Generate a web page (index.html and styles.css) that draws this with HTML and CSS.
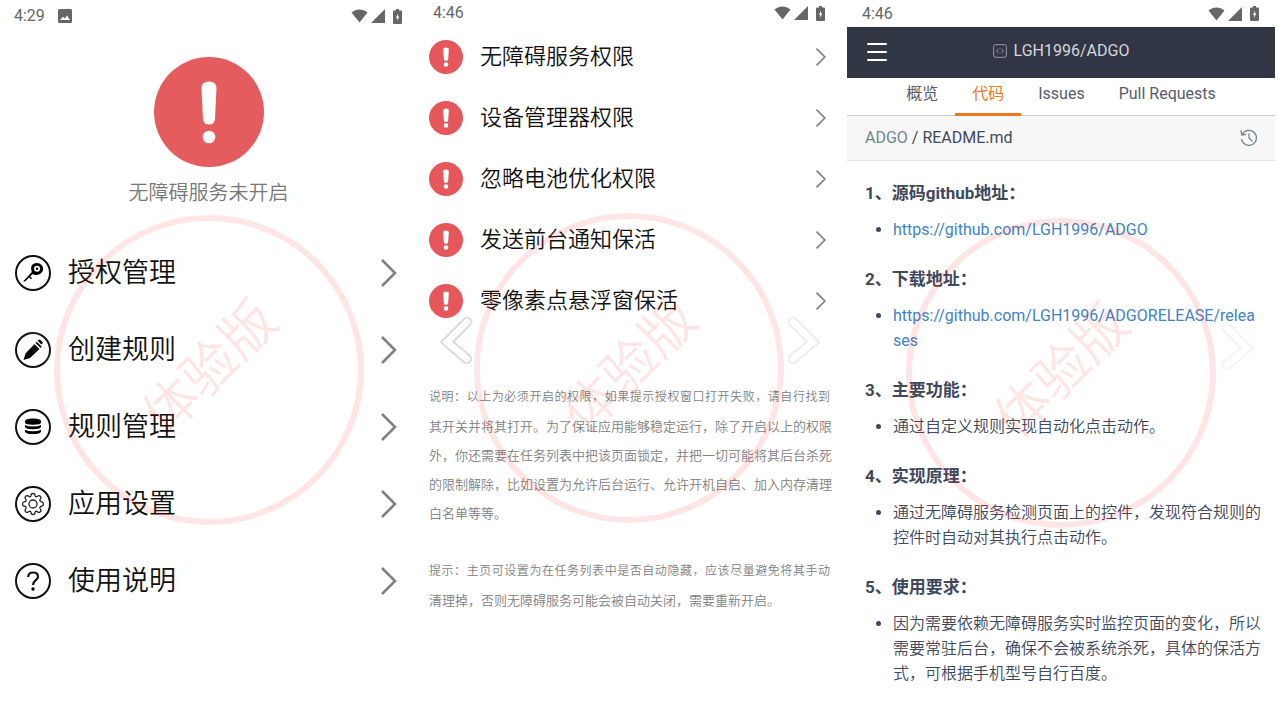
FILE: index.html
```html
<!DOCTYPE html>
<html lang="zh-CN">
<head>
<meta charset="utf-8">
<meta name="viewport" content="width=device-width, initial-scale=1">
<title>ADGO</title>
<link rel="stylesheet" href="styles.css">
</head>
<body>
<svg class="sprite" aria-hidden="true">
  <symbol id="wifi" viewBox="0 0 17 14"><path d="M0.5 3.6C5.2-.4 11.8-.4 16.500 3.600L8.500 13.500z"/></symbol>
  <symbol id="signal" viewBox="0 0 14 14"><path d="M14 0v14H0z"/></symbol>
  <symbol id="battery" viewBox="0 0 9 15"><path fill-rule="evenodd" d="M3 0h3v1.500h2q1 0 1 1V14q0 1-1 1H1q-1 0-1-1V2.500q0-1 1-1h2zM5 4.500L3 9H4.300v3L6.200 7.500H5z"/></symbol>
  <symbol id="alert" viewBox="0 0 110 110"><circle cx="55" cy="55" r="55" fill="#e55c5e"/><path fill="#fff" d="M47.500 31q0-6.500 7.500-6.500t7.500 6.500L61 62q-.6 5.500-6 5.500T49 62z"/><circle cx="55" cy="80" r="6.300" fill="#fff"/></symbol>
  <symbol id="alert-small" viewBox="0 0 34 34"><circle cx="17" cy="17" r="17" fill="#e5575a"/><path fill="#fff" d="M14.200 9q0-1.500 2.800-1.500T19.800 9l-.6 10q-.2 2-2.200 2t-2.200-2z"/><circle cx="17" cy="24.500" r="2.300" fill="#fff"/></symbol>
  <symbol id="next" viewBox="0 0 16 28"><path d="M1 1L14 14 1 27" fill="none" stroke="#808080" stroke-width="2.600"/></symbol>
  <symbol id="slide" viewBox="0 0 40 56"><path d="M31 8L11 28l20 17" fill="none" stroke="#ccc" stroke-width="9" stroke-linecap="round"/><path d="M31 8L11 28l20 17" fill="none" stroke="#fff" stroke-width="7" stroke-linecap="round"/></symbol>
</svg>
<main class="gallery">
  <section class="screen home">
    <div class="status"><span>4:29</span>
      <svg class="photo" viewBox="0 0 14 14"><path fill-rule="evenodd" d="M1.500 0h11Q14 0 14 1.500v11q0 1.500-1.500 1.500h-11Q0 14 0 12.500v-11Q0 0 1.500 0zM2 11h10L9 6.500 6.800 9.500 5 7.800z"/></svg>
      <span class="signals"><svg class="wifi"><use href="#wifi"/></svg><svg class="signal"><use href="#signal"/></svg><svg class="battery"><use href="#battery"/></svg></span></div>
    <div class="hero"><svg class="hero-icon"><use href="#alert"/></svg><p>无障碍服务未开启</p></div>
    <nav class="menu">
      <button type="button"><svg class="round" viewBox="0 0 36 36"><circle class="ring" cx="18" cy="18" r="17"/><path fill-rule="evenodd" d="M16.300 11.500C17.500 7.500 24 6.500 27 10.500S27 19.500 22 20q-3 .2-4.300-1L10 26.500H8L16.800 17q-1.200-2.500-.5-5.500zM22 10.800a3 3 0 1 0 .1 6 3 3 0 0 0-.1-6z"/><circle cx="22" cy="13.800" r="1.300"/><path d="M15 21l2 2.500-1 .8-2-2z"/></svg><span>授权管理</span><svg class="next"><use href="#next"/></svg></button>
      <button type="button"><svg class="round" viewBox="0 0 36 36"><circle class="ring" cx="18" cy="18" r="17"/><path d="M19.500 12l5 5-9.500 9-6.500 2 2-6.500zM20.500 11l1.300-1.300 5 5-1.300 1.300zM22.700 8.800l1-1q.7-.7 1.500 0l2.200 2.200q.8.8 0 1.600l-1 1z"/></svg><span>创建规则</span><svg class="next"><use href="#next"/></svg></button>
      <button type="button"><svg class="round" viewBox="0 0 36 36"><circle class="ring" cx="18" cy="18" r="17"/><path d="M10 12q0-2.500 8-2.500t8 2.500v1.500q0 2.200-8 2.200t-8-2.200zM10 16q3 1.500 8 1.500t8-1.500v2q-1 2.200-8 2.200T10 18zM10 20.700q3 1.500 8 1.500t8-1.500v2q-1 2.300-8 2.300t-8-2.300z"/></svg><span>规则管理</span><svg class="next"><use href="#next"/></svg></button>
      <button type="button"><svg class="round" viewBox="0 0 36 36"><circle class="ring" cx="18" cy="18" r="17"/><path class="thin" d="M16 9.500q0-2 2-2t2 2q.2 1.500 1.700 1.200l1.600-1q1-.5 2 .6t.5 2l-.8 1.500q-.5 1.300 1 1.900l1.300.3q1.200.4 1.200 2t-1.200 2l-1.300.3q-1.500.6-1 1.900l.8 1.500q.5 1-.5 2t-2 .6l-1.600-1q-1.500-.3-1.700 1.200 0 2-2 2t-2-2q-.2-1.500-1.700-1.200l-1.600 1q-1 .5-2-.6t-.5-2l.8-1.500q.5-1.300-1-1.900L8.700 20q-1.200-.4-1.200-2t1.200-2l1.300-.3q1.500-.6 1-1.900l-.8-1.500q-.5-1 .5-2t2-.6l1.600 1q1.500.3 1.700-1.200z"/><circle class="thin" cx="18" cy="18" r="4"/></svg><span>应用设置</span><svg class="next"><use href="#next"/></svg></button>
      <button type="button"><svg class="round" viewBox="0 0 36 36"><circle class="ring" cx="18" cy="18" r="17"/><path class="query" d="M13.200 14q0-4.500 4.900-4.500t4.900 4.200c0 3.500-5 3.500-5 8.300"/><circle cx="18" cy="26" r="1.700"/></svg><span>使用说明</span><svg class="next"><use href="#next"/></svg></button>
    </nav>
    <div class="mark"><span>体验版</span></div>
    <svg class="slide slide-prev faint"><use href="#slide"/></svg>
  </section>

  <section class="screen permissions">
    <div class="status"><span>4:46</span><span class="signals"><svg class="wifi"><use href="#wifi"/></svg><svg class="signal"><use href="#signal"/></svg><svg class="battery"><use href="#battery"/></svg></span></div>
    <div class="perm-list">
      <button type="button"><svg class="perm-icon"><use href="#alert-small"/></svg><span>无障碍服务权限</span><svg class="next"><use href="#next"/></svg></button>
      <button type="button"><svg class="perm-icon"><use href="#alert-small"/></svg><span>设备管理器权限</span><svg class="next"><use href="#next"/></svg></button>
      <button type="button"><svg class="perm-icon"><use href="#alert-small"/></svg><span>忽略电池优化权限</span><svg class="next"><use href="#next"/></svg></button>
      <button type="button"><svg class="perm-icon"><use href="#alert-small"/></svg><span>发送前台通知保活</span><svg class="next"><use href="#next"/></svg></button>
      <button type="button"><svg class="perm-icon"><use href="#alert-small"/></svg><span>零像素点悬浮窗保活</span><svg class="next"><use href="#next"/></svg></button>
    </div>
    <div class="notes">
      <p><span class="full dense">说明：以上为必须开启的权限，如果提示授权窗口打开失败，请自行找到</span><span class="full">其开关并将其打开。为了保证应用能够稳定运行，除了开启以上的权限</span><span class="full">外，你还需要在任务列表中把该页面锁定，并把一切可能将其后台杀死</span><span class="full">的限制解除，比如设置为允许后台运行、允许开机自启、加入内存清理</span><span>白名单等等。</span></p>
      <p><span class="full dense">提示：主页可设置为在任务列表中是否自动隐藏，应该尽量避免将其手动</span><span>清理掉，否则无障碍服务可能会被自动关闭，需要重新开启。</span></p>
    </div>
    <div class="mark"><span>体验版</span></div>
    <button type="button" class="slide slide-prev" aria-label="上一张"><svg><use href="#slide"/></svg></button>
    <button type="button" class="slide slide-next soft" aria-label="下一张"><svg><use href="#slide"/></svg></button>
  </section>

  <section class="screen readme">
    <div class="status"><span>4:46</span><span class="signals"><svg class="wifi"><use href="#wifi"/></svg><svg class="signal"><use href="#signal"/></svg><svg class="battery"><use href="#battery"/></svg></span></div>
    <header class="topbar">
      <button type="button" class="burger" aria-label="菜单"><svg viewBox="0 0 20 18"><path d="M1 1h18M1 9h18M1 17h18"/></svg></button>
      <h1><svg viewBox="0 0 14 14"><rect x=".7" y=".7" width="12.600" height="12.600" rx="1.500"/><path d="M6 4.500L3.500 7 6 9.500M8 4.500L10.500 7 8 9.500"/></svg>LGH1996/ADGO</h1>
    </header>
    <nav class="tabs"><a href="#">概览</a><a href="#" class="active">代码</a><a href="#">Issues</a><a href="#">Pull Requests</a></nav>
    <div class="path"><span><a href="#">ADGO</a> / README.md</span>
      <svg viewBox="0 0 18 18"><path d="M2.200 5.500A7.500 7.500 0 1 1 1.500 10M1 1.500l.8 4.500 4.500-.6M9 4.500V9l3.500 3.500"/></svg></div>
    <article>
      <h2>1、源码github地址：</h2>
      <ul><li><a href="#">https://github.com/LGH1996/ADGO</a></li></ul>
      <h2>2、下载地址：</h2>
      <ul><li><a href="#">https://github.com/LGH1996/ADGORELEASE/relea<wbr>ses</a></li></ul>
      <h2>3、主要功能：</h2>
      <ul><li>通过自定义规则实现自动化点击动作。</li></ul>
      <h2>4、实现原理：</h2>
      <ul><li>通过无障碍服务检测页面上的控件，发现符合规则的控件时自动对其执行点击动作。</li></ul>
      <h2>5、使用要求：</h2>
      <ul><li>因为需要依赖无障碍服务实时监控页面的变化，所以需要常驻后台，确保不会被系统杀死，具体的保活方式，可根据手机型号自行百度。</li></ul>
    </article>
    <div class="mark"><span>体验版</span></div>
    <button type="button" class="slide slide-next softer" aria-label="下一张"><svg><use href="#slide"/></svg></button>
  </section>
</main>
</body>
</html>
```
FILE: styles.css
```css
* { box-sizing: border-box; }
body {
  margin: 0;
  background: #fff;
  color: #111;
  font-family: Roboto, "Noto Sans CJK SC", sans-serif;
}
h1, h2, p, ul { margin: 0; padding: 0; }
a { text-decoration: none; }
button { border: 0; padding: 0; background: none; color: inherit; font: inherit; text-align: left; }
svg { display: block; flex: none; }
.sprite { position: absolute; width: 0; height: 0; }

.gallery {
  display: grid;
  grid-template-columns: 424fr 423fr 428fr;
  min-height: 100vh;
  padding-right: 3px;
}
.screen { position: relative; min-width: 0; }

.status {
  display: flex;
  align-items: center;
  height: 26px;
  font-size: 16px;
  font-weight: 400;
  line-height: 20px;
  color: #666;
  fill: #666;
}
.signals { display: flex; align-items: center; gap: 3px; margin-left: auto; }
.wifi { width: 17px; height: 14px; }
.signal { width: 14px; height: 14px; }
.battery { width: 9px; height: 15px; margin-left: 5px; }
.photo { width: 14px; height: 14px; margin-left: 13px; }

.mark {
  position: absolute;
  display: flex;
  align-items: center;
  justify-content: center;
  width: 310px;
  height: 310px;
  border: 6px solid #f00;
  border-radius: 50%;
  opacity: .1;
  pointer-events: none;
  color: #f00;
  font-size: 54px;
  font-weight: 350;
  line-height: 60px;
}
.mark span { padding-left: 4px; transform: rotate(-45deg); }
.slide { position: absolute; width: 40px; height: 56px; filter: drop-shadow(0 0 1px #ccc); }
.slide svg { width: 40px; height: 56px; }
.slide-next { transform: scaleX(-1); }
.faint { opacity: .08; }
.soft { opacity: .5; }
.softer { opacity: .3; }

.home { font-weight: 350; }
.home .status { height: 32px; padding: 0 22px 0 14px; }
.hero { display: flex; flex-direction: column; align-items: center; gap: 11px; padding: 25px 7px 0 0; }
.hero-icon { width: 110px; height: 110px; }
.hero p { font-size: 20px; line-height: 30px; color: #777; }
.menu { display: flex; flex-direction: column; padding: 26px 27px 0 15px; }
.menu button { display: flex; align-items: center; gap: 17px; height: 77px; font-size: 27px; line-height: 36px; }
.menu .next { width: 16px; height: 28px; margin-left: auto; }
.round { width: 36px; height: 36px; }
.ring { fill: none; stroke: #111; stroke-width: 2; }
.thin { fill: none; stroke: #222; stroke-width: 1.300; }
.query { fill: none; stroke: #111; stroke-width: 2.200; }
.home .mark { left: 54px; top: 215px; }
.home .slide-prev { left: 18px; top: 314px; }

.permissions { font-weight: 350; }
.permissions .status { padding: 0 22px 0 9px; }
.perm-list { display: flex; flex-direction: column; padding: 0 20px 0 5px; }
.perm-list button { display: flex; align-items: center; gap: 17px; height: 61px; font-size: 22px; line-height: 32px; }
.perm-icon { width: 34px; height: 34px; }
.perm-list .next { width: 12px; height: 18px; margin-left: auto; }
.notes { display: flex; flex-direction: column; gap: 29px; padding: 52px 17px 0 5px; font-size: 13px; line-height: 29px; color: #808080; }
.notes span { display: block; height: 29px; white-space: nowrap; }
.full { text-align: justify; text-align-last: justify; }
.notes .dense { font-size: 12px; }
.permissions .mark { left: 50px; top: 213px; }
.permissions .slide-prev { left: 12px; top: 314px; }
.permissions .slide-next { left: 360px; top: 314px; }

.readme { color: #40485b; }
.readme .status { height: 27px; padding: 0 16px 0 15px; }
.topbar { position: relative; display: flex; align-items: center; justify-content: center; height: 51px; padding-bottom: 4px; background: #313645; }
.topbar h1 { display: flex; align-items: center; gap: 7px; color: #d5d7db; font-size: 16px; font-weight: 400; line-height: 20px; }
.topbar h1 svg { width: 14px; height: 14px; fill: none; stroke: #9a9da6; }
.burger { position: absolute; left: 20px; top: 16px; }
.burger svg { width: 20px; height: 18px; fill: none; stroke: #fff; stroke-width: 2; stroke-linecap: round; }
.tabs { display: flex; justify-content: center; height: 38px; border-bottom: 1px solid #ccc; }
.tabs a { height: 38px; padding: 4px 17px 0; color: #555c6c; font-size: 16px; line-height: 24px; }
.tabs .active { border-bottom: 3px solid #ef7819; color: #ef7819; }
.path { display: flex; align-items: center; justify-content: space-between; height: 45px; padding: 0 17px 0 18px; border-bottom: 1px solid #e2e2e2; background: #f7f7f7; font-size: 16px; line-height: 24px; }
.path a { color: #6d8791; }
.path svg { width: 18px; height: 18px; fill: none; stroke: #6d8791; stroke-width: 1.300; }
article { padding: 20px 12px 0 18px; font-size: 16px; line-height: 25px; }
article h2 { margin-bottom: 11px; font-size: 17px; font-weight: 700; line-height: 25px; }
article ul { margin-bottom: 25px; padding-left: 28px; font-weight: 350; }
article a { color: #4183c4; font-weight: 400; }
.readme .mark { left: 59px; top: 218px; }
.readme .slide-next { left: 371px; top: 320px; }
```
